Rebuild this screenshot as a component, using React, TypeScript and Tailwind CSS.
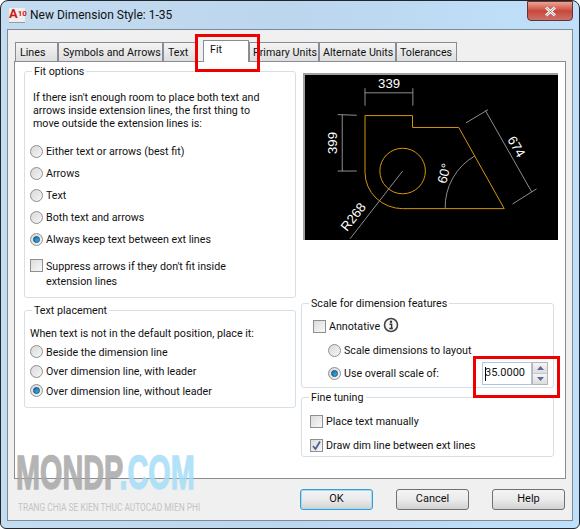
import { ReactNode } from "react";

function Radio({ checked = false }: { checked?: boolean }) {
  return (
    <span className="flex h-[13px] w-[13px] shrink-0 items-center justify-center rounded-full border border-[#8e8f8f] bg-gradient-to-br from-[#d8d8d8] to-[#f6f6f6]">
      {checked && (
        <span className="h-[7px] w-[7px] rounded-full border border-[#0f4f7f] bg-gradient-to-br from-[#0f6fa8] to-[#3fb4e6]" />
      )}
    </span>
  );
}

function Check({ checked = false }: { checked?: boolean }) {
  return (
    <span className="flex h-[13px] w-[13px] shrink-0 items-center justify-center border border-[#8e8f8f] bg-gradient-to-br from-[#dcdcdc] to-[#f8f8f8]">
      {checked && (
        <svg width="11" height="11" viewBox="0 0 11 11">
          <path d="M2 6 L4.5 9 L9 1.5" fill="none" stroke="#4a5f97" strokeWidth="1.8" />
        </svg>
      )}
    </span>
  );
}

function Group({ title, className, children }: { title: string; className: string; children: ReactNode }) {
  return (
    <div className={`relative rounded-[3px] border border-[#d5dfe5] ${className}`}>
      <span className="absolute -top-[7px] left-[7px] bg-white px-[2px] leading-[14px]">{title}</span>
      {children}
    </div>
  );
}

function RadioRow({ label, checked, className }: { label: string; checked?: boolean; className: string }) {
  return (
    <div className={`flex items-center gap-[3px] ${className}`}>
      <Radio checked={checked} />
      <span className="mt-[2px]">{label}</span>
    </div>
  );
}

function PushButton({ label, focused }: { label: string; focused?: boolean }) {
  return (
    <button
      className={`h-[21px] w-[73px] rounded-[3px] border bg-gradient-to-b from-[#f4f4f4] via-[#ebebeb] to-[#d2d2d2] text-[11px] text-[#111] ${
        focused ? "border-[#3c9ccc] shadow-[inset_0_0_0_1px_#a5dcf4]" : "border-[#707070]"
      }`}
    >
      {label}
    </button>
  );
}

function Preview() {
  const gray = "#8f8f8f";
  const orange = "#d9960b";
  const label = { fill: "#fff", fontSize: 40, fontFamily: "'Liberation Sans', sans-serif", textAnchor: "middle" as const };
  return (
    <svg viewBox="24 40 765 500" className="block h-[167px] w-[255px] border-t-2 border-l-2 border-[#a0a0a0] bg-black">
      <g fill="none" stroke={gray} strokeWidth="3">
        <path d="M204 94H350M205 80V133M350 80V133" />
        <path d="M136 160V332M122 160L180 162M122 331H180" />
        <path d="M570 148L710 394M511 185L578 145M652 431L725 385" />
        <path d="M160 536L319 331" />
        <path d="M448 445A179 179 0 0 1 538 285" />
      </g>
      <g fill="none" stroke={orange} strokeWidth="3">
        <path d="M319 445H627L489 199H349V163H205V335A114 110 0 0 0 319 445" />
        <circle cx="319" cy="331" r="69" />
      </g>
      <text {...label} x="278" y="79">339</text>
      <text {...label} transform="translate(120 246) rotate(-90)">399</text>
      <text {...label} transform="translate(652 264) rotate(60)">674</text>
      <text {...label} transform="translate(458 342) rotate(-75)">60°</text>
      <text {...label} transform="translate(180 478) rotate(-52)">R268</text>
    </svg>
  );
}

export default function App() {
  return (
    <div
      className="relative h-[529px] w-[580px] overflow-hidden rounded-t-[8px] rounded-b-[6px] border border-[#20262c] bg-gradient-to-r from-[#c4dcf0] via-[#bcd6ee] to-[#bfe0fa] text-[10.7px] text-[#111]"
      style={{ fontFamily: "Roboto, 'Liberation Sans', sans-serif" }}
    >
      {/* title bar */}
      <div className="flex h-[28px] items-center pl-[8px]">
        <div className="mr-[5px] flex h-[15px] w-[16px] items-start border-b border-[#999] bg-[#eee] font-bold leading-[12px] text-[#d01818]">
          <span className="text-[13px]">A</span>
          <span className="text-[8px]">10</span>
        </div>
        <span className="text-[12px] text-[#111]">New Dimension Style: 1-35</span>
        <div className="ml-auto mr-[6px] -mt-[8px] flex h-[20px] w-[46px] items-center justify-center rounded-b-[4px] border border-[#6b3030] bg-gradient-to-b from-[#e9a595] via-[#c8473a] to-[#c8706a]">
          <svg width="13" height="11" viewBox="0 0 13 11">
            <path d="M2 1.5 L11 9.5 M11 1.5 L2 9.5" stroke="#fff" strokeWidth="3" />
            <path d="M2 1.5 L11 9.5 M11 1.5 L2 9.5" stroke="#555" strokeWidth="0.6" />
          </svg>
        </div>
      </div>

      {/* client area */}
      <div className="mx-[6px] h-[492px] border border-[#7f8a96] bg-[#f0f0f0] px-[6px] pt-[12px]">
        <div className="flex h-[19px] pl-[1px]">
          {[
            ["Lines", "w-[43px]"],
            ["Symbols and Arrows", "w-[105px]"],
            ["Text", "w-[33px]"],
          ].map(([name, w]) => (
            <div key={name} className={`${w} whitespace-nowrap border border-b-0 border-[#898c95] bg-gradient-to-b from-[#f4f4f4] to-[#dedede] pl-[4px] leading-[19px]`}>
              {name}
            </div>
          ))}
          <div className="relative z-10 -mt-[2px] ml-[7px] h-[22px] w-[46px] border border-b-0 border-[#898c95] bg-white pl-[6px] leading-[18px]">Fit</div>
          {[
            ["Primary Units", "w-[70px]"],
            ["Alternate Units", "w-[77px]"],
            ["Tolerances", "w-[61px]"],
          ].map(([name, w]) => (
            <div key={name} className={`${w} whitespace-nowrap border border-b-0 border-[#898c95] bg-gradient-to-b from-[#f4f4f4] to-[#dedede] pl-[3px] leading-[19px]`}>
              {name}
            </div>
          ))}
        </div>

        <div className="flex h-[418px] border border-[#898c95] bg-white pt-[9px] pl-[9px]">
          {/* left column */}
          <div className="w-[272px]">
            <Group title="Fit options" className="h-[227px] pt-[19px] pl-[8px]">
              <p className="leading-[13px]">
                If there isn't enough room to place both text and
                <br />
                arrows inside extension lines, the first thing to
                <br />
                move outside the extension lines is:
              </p>
              <div className="mt-[10px] -ml-[3px]">
                <RadioRow label="Either text or arrows (best fit)" className="h-[22px]" />
                <RadioRow label="Arrows" className="h-[22px]" />
                <RadioRow label="Text" className="h-[22px]" />
                <RadioRow label="Both text and arrows" className="h-[22px]" />
                <RadioRow label="Always keep text between ext lines" checked className="h-[22px]" />
                <div className="mt-[9px] flex items-start gap-[3px]">
                  <Check />
                  <span className="leading-[15px]">
                    Suppress arrows if they don't fit inside
                    <br />
                    extension lines
                  </span>
                </div>
              </div>
            </Group>
            <Group title="Text placement" className="mt-[12px] h-[98px] pt-[16px] pl-[5px]">
              <p className="leading-[13px]">When text is not in the default position, place it:</p>
              <div className="mt-[2px]">
                <RadioRow label="Beside the dimension line" className="h-[19.5px]" />
                <RadioRow label="Over dimension line, with leader" className="h-[19.5px]" />
                <RadioRow label="Over dimension line, without leader" checked className="h-[19.5px]" />
              </div>
            </Group>
          </div>

          {/* right column */}
          <div className="ml-[5px] w-[255px]">
            <div className="ml-[2px] mt-[2px]">
              <Preview />
            </div>
            <Group title="Scale for dimension features" className="mt-[63px] h-[85px] w-[253px] pt-[14px] pl-[11px]">
              <div className="flex h-[16px] items-center gap-[3px]">
                <Check />
                <span className="mt-[2px]">Annotative</span>
                <svg className="-mt-[2px]" width="16" height="16" viewBox="0 0 16 16">
                  <circle cx="8" cy="8" r="6.5" fill="#f6f6f6" stroke="#444" strokeWidth="1.6" />
                  <circle cx="8" cy="4.8" r="1.2" fill="#333" />
                  <path d="M6.5 7.2H8.6V11.3H9.8M6.3 11.5H9.8" fill="none" stroke="#333" strokeWidth="1.4" />
                </svg>
              </div>
              <div className="mt-[5px] pl-[15px]">
                <RadioRow label="Scale dimensions to layout" className="h-[23px]" />
                <div className="flex h-[23px] items-center justify-between pr-[5px]">
                  <RadioRow label="Use overall scale of:" checked className="" />
                  <div className="flex items-center">
                    <div className="flex h-[23px] w-[50px] items-center border border-[#abc6de] bg-white pl-[2px] text-[11px]">
                      <span className="h-[14px] w-px bg-black" />
                      <span className="-ml-[1px]">35.0000</span>
                    </div>
                    <div className="flex h-[23px] w-[16px] flex-col border border-[#b5b5b5] bg-[#f0f0f0]">
                      <div className="flex h-1/2 items-center justify-center border-b border-[#c8c8c8] bg-gradient-to-b from-[#f6f6f6] to-[#dcdcdc]">
                        <svg width="7" height="4" viewBox="0 0 7 4"><path d="M3.5 0L7 4H0Z" fill="#5a6a9a" /></svg>
                      </div>
                      <div className="flex h-1/2 items-center justify-center bg-gradient-to-b from-[#f6f6f6] to-[#dcdcdc]">
                        <svg width="7" height="4" viewBox="0 0 7 4"><path d="M0 0H7L3.5 4Z" fill="#5a6a9a" /></svg>
                      </div>
                    </div>
                  </div>
                </div>
              </div>
            </Group>
            <Group title="Fine tuning" className="mt-[9px] h-[60px] w-[253px] pt-[11px] pl-[8px]">
              <div className="flex h-[24px] items-center gap-[3px]">
                <Check />
                <span className="mt-[2px]">Place text manually</span>
              </div>
              <div className="flex h-[24px] items-center gap-[3px]">
                <Check checked />
                <span className="mt-[2px]">Draw dim line between ext lines</span>
              </div>
            </Group>
          </div>
        </div>

        {/* footer buttons */}
        <div className="mt-[10px] mr-[1px] flex justify-end gap-[23px]">
          <PushButton label="OK" focused />
          <PushButton label="Cancel" />
          <PushButton label="Help" />
        </div>
      </div>

      {/* watermark */}
      <div className="pointer-events-none absolute left-[15px] top-[448px] w-[300px] opacity-85">
        <div
          className="origin-left scale-x-[0.6] whitespace-nowrap text-[48px] font-bold leading-[48px] text-[#a8a8a8] [-webkit-text-stroke:1.5px_#a8a8a8]"
          style={{ fontFamily: "'Liberation Sans', sans-serif" }}
        >
          MONDP<span className="text-[#a6def7] [-webkit-text-stroke:1.5px_#a6def7]">.COM</span>
        </div>
        <div className="ml-[2px] mt-[5px] origin-left scale-x-[0.76] whitespace-nowrap text-[11px] leading-[12px] text-[#bcbcbc]">
          TRANG CHIA SE KIEN THUC AUTOCAD MIEN PHI
        </div>
      </div>

      {/* red highlight boxes */}
      <div className="pointer-events-none absolute left-[194px] top-[33px] z-20 h-[38px] w-[65px] border-[3px] border-[#ee0000]" />
      <div className="pointer-events-none absolute left-[472px] top-[355px] z-20 h-[42px] w-[87px] border-[3px] border-[#ee0000]" />
    </div>
  );
}
